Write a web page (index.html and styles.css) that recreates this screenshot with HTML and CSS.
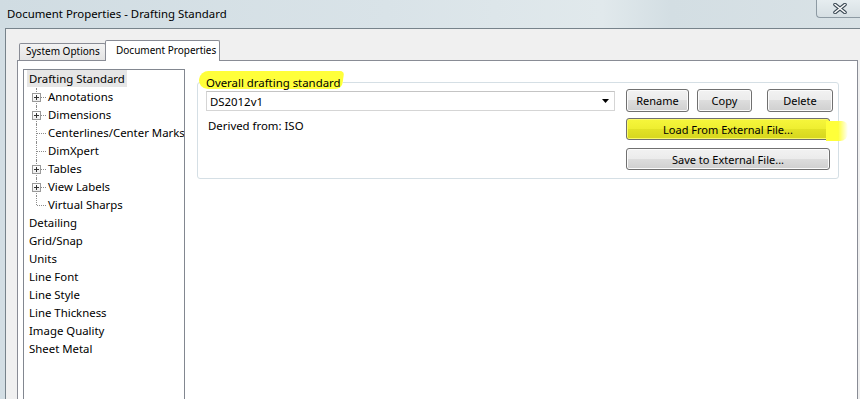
FILE: index.html
```html
<!DOCTYPE html>
<html lang="en">
<head>
  <meta charset="UTF-8" />
  <title>Document Properties - Drafting Standard</title>
  <link rel="stylesheet" href="styles.css">
</head>
<body>

  <div class="titlebar">
    <span class="title">Document Properties - Drafting Standard</span>
    <div class="close">
      <svg width="14" height="11" viewBox="0 0 14 11">
        <path d="M2 1.5 L12 9.5 M12 1.5 L2 9.5" stroke="#3c4a55" stroke-width="3.6" stroke-linecap="round"/>
        <path d="M2 1.5 L12 9.5 M12 1.5 L2 9.5" stroke="#ffffff" stroke-width="1.6" stroke-linecap="round"/>
      </svg>
    </div>
  </div>

  <div class="client">
    <div class="tabs">
      <div class="tab">System Options</div>
      <div class="tab active">Document Properties</div>
    </div>

    <div class="panel">
      <ul class="tree">
        <li class="top"><span class="selected">Drafting Standard</span></li>
        <li class="child"><span class="plus"></span>Annotations</li>
        <li class="child"><span class="plus"></span>Dimensions</li>
        <li class="child">Centerlines/Center Marks</li>
        <li class="child">DimXpert</li>
        <li class="child"><span class="plus"></span>Tables</li>
        <li class="child"><span class="plus"></span>View Labels</li>
        <li class="child last">Virtual Sharps</li>
        <li class="top"><span>Detailing</span></li>
        <li class="top"><span>Grid/Snap</span></li>
        <li class="top"><span>Units</span></li>
        <li class="top"><span>Line Font</span></li>
        <li class="top"><span>Line Style</span></li>
        <li class="top"><span>Line Thickness</span></li>
        <li class="top"><span>Image Quality</span></li>
        <li class="top"><span>Sheet Metal</span></li>
      </ul>

      <fieldset class="group">
        <legend><span class="marker"></span><span class="legend-text">Overall drafting standard</span></legend>
        <div class="group-body">
          <div class="left">
            <div class="combo">
              <span>DS2012v1</span>
              <svg width="7" height="4" viewBox="0 0 7 4"><path d="M0 0 H7 L3.5 4 Z" fill="#000"/></svg>
            </div>
            <div class="derived">Derived from: ISO</div>
          </div>
          <div class="actions">
            <div class="row">
              <button class="btn rename">Rename</button>
              <button class="btn copy">Copy</button>
              <button class="btn delete">Delete</button>
            </div>
            <div class="load-wrap">
              <button class="btn wide load">Load From External File...</button>
              <span class="marker-tail"></span>
            </div>
            <button class="btn wide save">Save to External File...</button>
          </div>
        </div>
      </fieldset>
    </div>
  </div>

</body>
</html>
```

FILE: styles.css
```css
* {
  box-sizing: border-box;
}

body {
  margin: 0;
  width: 860px;
  height: 399px;
  overflow: hidden;
  font-family: "Noto Sans", "Open Sans", sans-serif;
  font-size: 11.4px;
  color: #000;
  background: #d3dee4;
}

/* window title */
.titlebar {
  height: 28px;
  display: flex;
  align-items: flex-start;
  background: linear-gradient(90deg, #d0dce2 0%, #d9e3e8 45%, #e1e9ec 70%, #d3dee3 78%, #d9e2e6 100%);
}

.title {
  margin: 6px 0 0 7px;
  line-height: 16px;
  color: #000;
}

.close {
  margin-left: auto;
  width: 44px;
  height: 18px;
  border-left: 1px solid #8d9aa3;
  border-bottom: 1px solid #8d9aa3;
  border-bottom-left-radius: 4px;
  background: linear-gradient(#e6edf0, #d6dfe3);
  display: flex;
  justify-content: center;
  align-items: center;
  padding-left: 2px;
}

/* client area */
.client {
  margin-left: 5px;
  height: 371px;
  overflow: hidden;
  border-left: 1px solid #77838b;
  border-top: 1px solid #77838b;
  background: #f0f0f0;
}

.tabs {
  display: flex;
  align-items: flex-end;
  height: 31px;
  padding-left: 13px;
}

.tab {
  height: 17px;
  width: 87px;
  border: 1px solid #898c95;
  border-bottom: none;
  border-radius: 2px 2px 0 0;
  background: linear-gradient(#f3f3f3, #e3e3e3);
  padding-left: 6px;
  font-size: 10px;
  line-height: 15px;
  white-space: nowrap;
}

.tab.active {
  position: relative;
  height: 21px;
  width: 115px;
  margin-left: -1px;
  margin-bottom: -1px;
  background: #fff;
  padding-left: 10px;
  line-height: 18px;
}

.panel {
  margin-left: 11px;
  width: 841px;
  height: 341px;
  border: 1px solid #898c95;
  background: #fff;
  display: flex;
  align-items: flex-start;
}

/* tree */
.tree {
  list-style: none;
  margin: 8px 0 0 5px;
  padding: 0;
  width: 162px;
  height: 331px;
  border: 1px solid #828790;
  overflow: hidden;
  flex-shrink: 0;
}

.tree li {
  position: relative;
  height: 18px;
  line-height: 18px;
  white-space: nowrap;
}

.tree .top span {
  display: inline-block;
  margin-left: 3px;
  padding: 0 2px;
  line-height: 17px;
}

.tree .top .selected {
  background: #e6e6e6;
}

.tree .child {
  padding-left: 24px;
}

.tree .child::before {
  content: "";
  position: absolute;
  left: 12px;
  top: 0;
  height: 18px;
  border-left: 1px dotted #8c8c8c;
}

.tree .child.last::before {
  height: 9px;
}

.tree .child::after {
  content: "";
  position: absolute;
  left: 13px;
  top: 9px;
  width: 9px;
  border-top: 1px dotted #8c8c8c;
}

.plus {
  position: absolute;
  left: 8px;
  top: 5px;
  width: 9px;
  height: 9px;
  border: 1px solid #9a9a9a;
  background: linear-gradient(#fff, #ececec);
  z-index: 1;
}

.plus::before,
.plus::after {
  content: "";
  position: absolute;
  background: #333;
}

.plus::before {
  left: 1px;
  top: 3px;
  width: 5px;
  height: 1px;
}

.plus::after {
  left: 3px;
  top: 1px;
  width: 1px;
  height: 5px;
}

/* group box */
.group {
  margin: 14px 0 0 12px;
  width: 642px;
  height: 104px;
  padding: 0 4px 0 8px;
  border: 1px solid #d5dfe5;
  border-radius: 3px;
  min-width: 0;
}

.group legend {
  position: relative;
  margin-left: -2px;
  padding: 0 2px;
  line-height: 15px;
}

.legend-text {
  position: relative;
}

.marker {
  position: absolute;
  left: -5px;
  top: -4px;
  width: 144px;
  height: 18px;
  background: #ffff3a;
  border-radius: 8px 4px 6px 10px;
  transform: skewX(-8deg);
}

.group-body {
  display: flex;
  align-items: flex-start;
}

.left {
  width: 409px;
  flex-shrink: 0;
}

.combo {
  margin-top: 1px;
  height: 20px;
  border: 1px solid #d5d5d5;
  border-top-color: #c4c4c4;
  display: flex;
  align-items: center;
  justify-content: space-between;
  padding: 0 5px 0 3px;
}

.derived {
  margin-top: 7px;
  margin-left: 2px;
  line-height: 15px;
}

.actions {
  margin: -1px 0 0 11px;
  flex-shrink: 0;
}

.row {
  display: flex;
}

.btn {
  height: 23px;
  padding: 0;
  font: inherit;
  font-size: 11px;
  color: #000;
  border: 1px solid #707070;
  border-radius: 3px;
  background: linear-gradient(#f2f2f2 0%, #ebebeb 50%, #dddddd 50%, #cfcfcf 100%);
  box-shadow: inset 0 0 0 1px #fbfbfb;
}

.rename { width: 63px; }
.copy { width: 55px; margin-left: 8px; }
.delete { width: 66px; margin-left: 15px; }

.wide {
  display: block;
  width: 204px;
  height: 22px;
}

.load-wrap {
  position: relative;
  margin-top: 6px;
}

.load {
  background: linear-gradient(#f6f63c 0%, #eeee30 50%, #e2e226 50%, #d6d61e 100%);
  box-shadow: inset 0 0 0 1px #fafa6a;
}

.marker-tail {
  position: absolute;
  left: 200px;
  top: 3px;
  width: 22px;
  height: 20px;
  background: linear-gradient(90deg, #ffff3a 55%, rgba(255, 255, 58, 0));
  border-radius: 0 6px 8px 0;
}

.save {
  margin-top: 8px;
}
```
